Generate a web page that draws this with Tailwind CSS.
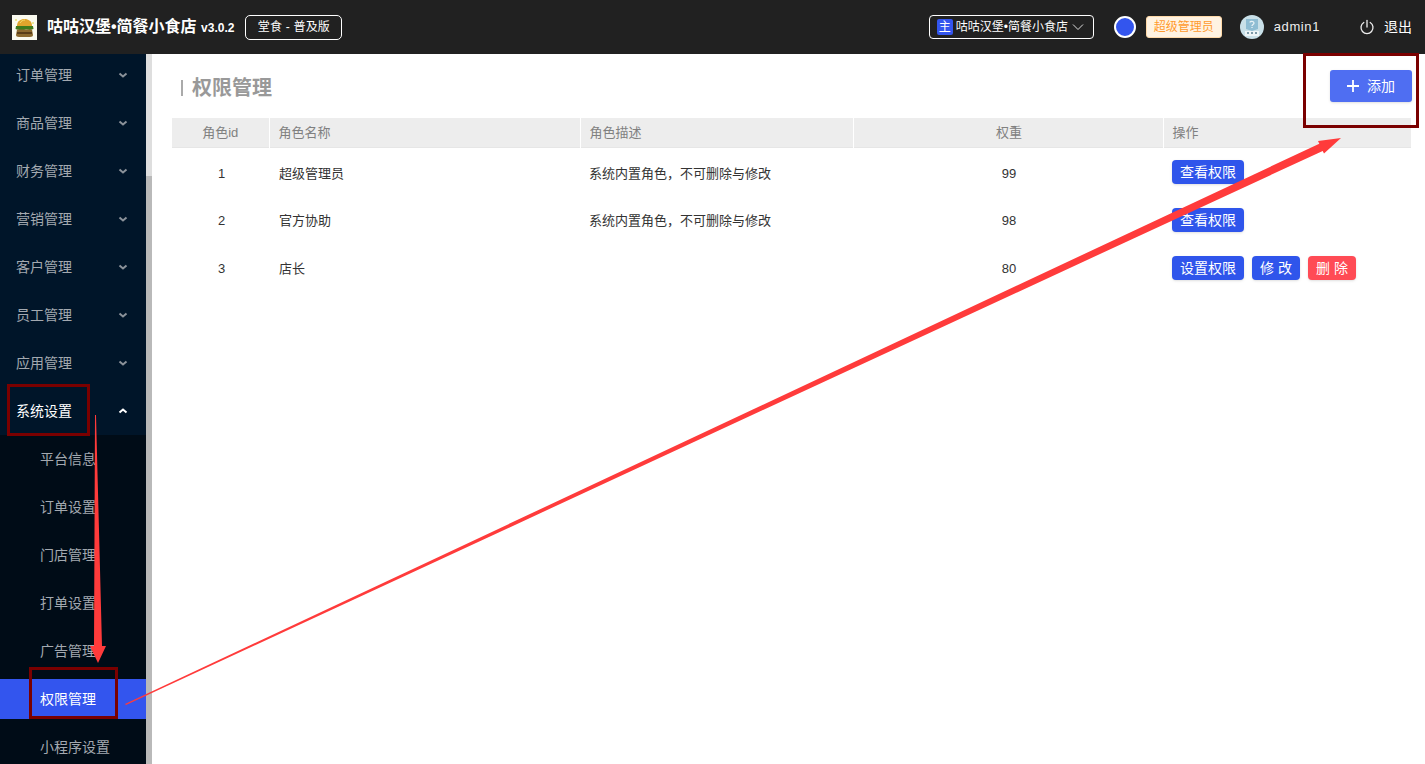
<!DOCTYPE html>
<html lang="zh-CN">
<head>
<meta charset="UTF-8">
<title>权限管理</title>
<script src="https://cdn.jsdelivr.net/npm/@tailwindcss/browser@4"></script>
</head>
<body class="relative h-[764px] w-[1425px] overflow-hidden bg-white font-['Liberation_Sans','Noto_Sans_CJK_SC',sans-serif] text-[13px]">
  <!-- Header -->
  <header class="flex h-[54px] items-center bg-[#212121] text-white">
    <svg class="mt-[1px] ml-[12px] h-[25px] w-[25px]" viewBox="0 0 25 25">
      <rect width="25" height="25" fill="#fbfbf0"/>
      <circle cx="4" cy="5" r="1" fill="#e8e27a"/>
      <circle cx="21" cy="8" r="1" fill="#e8e27a"/>
      <path d="M5 11C5 6 8.500 4 12.500 4S20 6 20 11Z" fill="#e0a52c"/>
      <path d="M8 8C9 6 11 5 13 5" stroke="#f4dc6a" fill="none"/>
      <path d="M4 11H21L21.500 14L18 15L14 14.500L10 15.500L5 14.500L3.500 14Z" fill="#3f7a1c"/>
      <path d="M5 14.500H20L21 20C21 21 20 22 18 22H7C5 22 4 21 4 20Z" fill="#8c6a2f"/>
      <rect x="5" y="17" width="15" height="2" fill="#5a3e18"/>
    </svg>
    <div class="ml-[10px] text-[16px] leading-none font-bold whitespace-nowrap">咕咕汉堡•简餐小食店 <span class="text-[12px]">v3.0.2</span></div>
    <div class="ml-[11px] flex h-[25px] w-[97px] items-center justify-center rounded-[5px] border border-white text-[12px] tracking-[0.2px]">堂食 - 普及版</div>

    <div class="ml-auto flex h-[24px] w-[165px] items-center rounded-[4px] border border-white pl-[7px] text-[12px] whitespace-nowrap">
      <span class="flex h-[16px] w-[16px] items-center justify-center rounded-[2px] bg-[#3355ee]">主</span>
      <span class="ml-[3px]">咕咕汉堡•简餐小食店</span>
      <svg class="ml-[4px] h-[12px] w-[12px]" viewBox="0 0 12 12" fill="none" stroke="#ddd"><path d="M1 3.500 6 8.500 11 3.500"/></svg>
    </div>
    <div class="ml-[20px] h-[22px] w-[22px] rounded-full border-2 border-white bg-[#3355ee]"></div>
    <div class="ml-[10px] flex h-[22px] w-[76px] items-center justify-center rounded-[3px] border border-[#ffd9a8] bg-[#fff3e2] text-[12px] text-[#ff9a2e]">超级管理员</div>
    <svg class="ml-[18px] h-[24px] w-[24px]" viewBox="0 0 24 24">
      <circle cx="12" cy="12" r="12" fill="#c9e0e8"/>
      <path d="M6 4H18V14L12 16L6 14Z" fill="#8fbdd3"/>
      <path d="M5 16H19V21H5Z" fill="#eef5f7"/>
      <path d="M7 18H9M11 18H13M15 18H17" stroke="#7d9aa8" stroke-width="2"/>
      <path d="M10 7.500C10 6 14 6 14 8C14 9.500 12 9.500 12 11M12 12V13" fill="none" stroke="#e8f2f6" stroke-width="1.300"/>
    </svg>
    <div class="ml-[10px] text-[13px] tracking-[0.6px] text-[#eee]">admin1</div>
    <svg class="ml-[39px] h-[16px] w-[16px]" viewBox="0 0 16 16" fill="none" stroke="#eee" stroke-width="1.300" stroke-linecap="round"><path d="M8 1.500V8"/><path d="M4.800 3.500A6 6 0 1 0 11.200 3.500"/></svg>
    <div class="mr-[13px] ml-[9px] text-[14px]">退出</div>
  </header>

  <div class="flex h-[710px]">
    <!-- Sidebar -->
    <aside class="relative w-[146px] shrink-0 overflow-hidden bg-[#001529] text-[14px] text-[#a3a9b0]">
      <div class="mt-[-3px]">
        <div class="flex h-[48px] items-center justify-between pr-[17px] pl-[16px]">订单管理<svg class="h-[12px] w-[12px]" viewBox="0 0 12 12" fill="none" stroke="#8b929a" stroke-width="2"><path d="M2.500 4.500 6 7.500 9.500 4.500"/></svg></div>
        <div class="flex h-[48px] items-center justify-between pr-[17px] pl-[16px]">商品管理<svg class="h-[12px] w-[12px]" viewBox="0 0 12 12" fill="none" stroke="#8b929a" stroke-width="2"><path d="M2.500 4.500 6 7.500 9.500 4.500"/></svg></div>
        <div class="flex h-[48px] items-center justify-between pr-[17px] pl-[16px]">财务管理<svg class="h-[12px] w-[12px]" viewBox="0 0 12 12" fill="none" stroke="#8b929a" stroke-width="2"><path d="M2.500 4.500 6 7.500 9.500 4.500"/></svg></div>
        <div class="flex h-[48px] items-center justify-between pr-[17px] pl-[16px]">营销管理<svg class="h-[12px] w-[12px]" viewBox="0 0 12 12" fill="none" stroke="#8b929a" stroke-width="2"><path d="M2.500 4.500 6 7.500 9.500 4.500"/></svg></div>
        <div class="flex h-[48px] items-center justify-between pr-[17px] pl-[16px]">客户管理<svg class="h-[12px] w-[12px]" viewBox="0 0 12 12" fill="none" stroke="#8b929a" stroke-width="2"><path d="M2.500 4.500 6 7.500 9.500 4.500"/></svg></div>
        <div class="flex h-[48px] items-center justify-between pr-[17px] pl-[16px]">员工管理<svg class="h-[12px] w-[12px]" viewBox="0 0 12 12" fill="none" stroke="#8b929a" stroke-width="2"><path d="M2.500 4.500 6 7.500 9.500 4.500"/></svg></div>
        <div class="flex h-[48px] items-center justify-between pr-[17px] pl-[16px]">应用管理<svg class="h-[12px] w-[12px]" viewBox="0 0 12 12" fill="none" stroke="#8b929a" stroke-width="2"><path d="M2.500 4.500 6 7.500 9.500 4.500"/></svg></div>
        <div class="flex h-[48px] items-center justify-between pr-[17px] pl-[16px] text-white">系统设置<svg class="h-[12px] w-[12px]" viewBox="0 0 12 12" fill="none" stroke="#fff" stroke-width="2"><path d="M2.500 7.500 6 4.500 9.500 7.500"/></svg></div>
        <div class="bg-[#000c17]">
          <div class="flex h-[48px] items-center pl-[40px]">平台信息</div>
          <div class="flex h-[48px] items-center pl-[40px]">订单设置</div>
          <div class="flex h-[48px] items-center pl-[40px]">门店管理</div>
          <div class="flex h-[48px] items-center pl-[40px]">打单设置</div>
          <div class="flex h-[48px] items-center pl-[40px]">广告管理</div>
          <div class="mt-[4px] flex h-[40px] items-center bg-[#3355ee] pl-[40px] text-white">权限管理</div>
          <div class="flex h-[56px] items-center pl-[40px]">小程序设置</div>
        </div>
      </div>
    </aside>
    <div class="w-[6px] shrink-0 bg-[#dedede]">
      <div class="mt-[122px] h-[588px] bg-[#b9b9b9]"></div>
    </div>

    <!-- Main -->
    <main class="min-w-0 flex-1 pr-[13px] pl-[20px]">
      <div class="flex h-[64px] items-center justify-between">
        <h1 class="mt-[4px] ml-[9px] flex items-center text-[20px] leading-none font-bold text-[#999]"><span class="mr-[9px] h-[16px] w-[2px] bg-[#aaa]"></span>权限管理</h1>
        <button class="flex h-[32px] w-[82px] items-center justify-center rounded-[3px] bg-[#4f6ef2] text-[14px] text-white shadow-sm">
          <svg class="mr-[8px] h-[12px] w-[12px]" viewBox="0 0 12 12" stroke="#fff" stroke-width="1.800"><path d="M6 0V12M0 6H12"/></svg>添加
        </button>
      </div>
      <table class="w-[1239px] table-fixed border-collapse text-[13px] text-[#333]">
        <thead>
          <tr class="h-[29px] border-b border-[#e6e6e6] bg-[#ededed] font-normal text-[#808080]">
            <th class="w-[97px] border-r border-white text-center font-normal">角色id</th>
            <th class="w-[311px] border-r border-white pl-[9px] text-left font-normal">角色名称</th>
            <th class="w-[273px] border-r border-white pl-[9px] text-left font-normal">角色描述</th>
            <th class="w-[310px] border-r border-white pl-[2px] text-center font-normal">权重</th>
            <th class="pl-[9px] text-left font-normal">操作</th>
          </tr>
        </thead>
        <tbody>
          <tr class="h-[48px]">
            <td class="pt-[4px] pl-[2px] text-center">1</td>
            <td class="pt-[4px] pl-[10px]">超级管理员</td>
            <td class="pt-[4px] pl-[9px]">系统内置角色，不可删除与修改</td>
            <td class="pt-[4px] pl-[2px] text-center">99</td>
            <td class="pt-[2px] pl-[9px]"><span class="flex h-[24px] w-[72px] items-center justify-center rounded-[4px] bg-[#2f55eb] text-[14px] text-white shadow-sm">查看权限</span></td>
          </tr>
          <tr class="h-[48px]">
            <td class="pt-[4px] pl-[2px] text-center">2</td>
            <td class="pt-[4px] pl-[10px]">官方协助</td>
            <td class="pt-[4px] pl-[9px]">系统内置角色，不可删除与修改</td>
            <td class="pt-[4px] pl-[2px] text-center">98</td>
            <td class="pt-[2px] pl-[9px]"><span class="flex h-[24px] w-[72px] items-center justify-center rounded-[4px] bg-[#2f55eb] text-[14px] text-white shadow-sm">查看权限</span></td>
          </tr>
          <tr class="h-[48px]">
            <td class="pt-[4px] pl-[2px] text-center">3</td>
            <td class="pt-[4px] pl-[10px]">店长</td>
            <td class="pt-[4px] pl-[9px]"></td>
            <td class="pt-[4px] pl-[2px] text-center">80</td>
            <td class="pt-[2px] pl-[9px]">
              <div class="flex gap-[8px]">
                <span class="flex h-[24px] w-[72px] items-center justify-center rounded-[4px] bg-[#2f55eb] text-[14px] text-white shadow-sm">设置权限</span>
                <span class="flex h-[24px] w-[48px] items-center justify-center rounded-[4px] bg-[#2f55eb] text-[14px] text-white shadow-sm">修 改</span>
                <span class="flex h-[24px] w-[48px] items-center justify-center rounded-[4px] bg-[#ff4b55] text-[14px] text-white shadow-sm">删 除</span>
              </div>
            </td>
          </tr>
        </tbody>
      </table>
    </main>
  </div>

  <!-- Annotations drawn over the screenshot -->
  <svg class="pointer-events-none absolute top-0 left-0" width="1425" height="764" viewBox="0 0 1425 764">
    <g fill="none" stroke="#7a0000" stroke-width="3">
      <rect x="8.500" y="385.500" width="80" height="49"/>
      <rect x="30.500" y="668.500" width="86" height="49"/>
      <rect x="1304.500" y="54.500" width="113" height="72"/>
    </g>
    <path d="M95 415 L96 415 L102 646 L106 646 L98 663 L90 646 L94 646 Z" fill="#ff3b3b"/>
    <path d="M125 704 L1319.300 143.700 L1318 141 L1341 138 L1324 153.600 L1322.700 150.900 L126 705 Z" fill="#ff3b3b"/>
  </svg>
</body>
</html>
